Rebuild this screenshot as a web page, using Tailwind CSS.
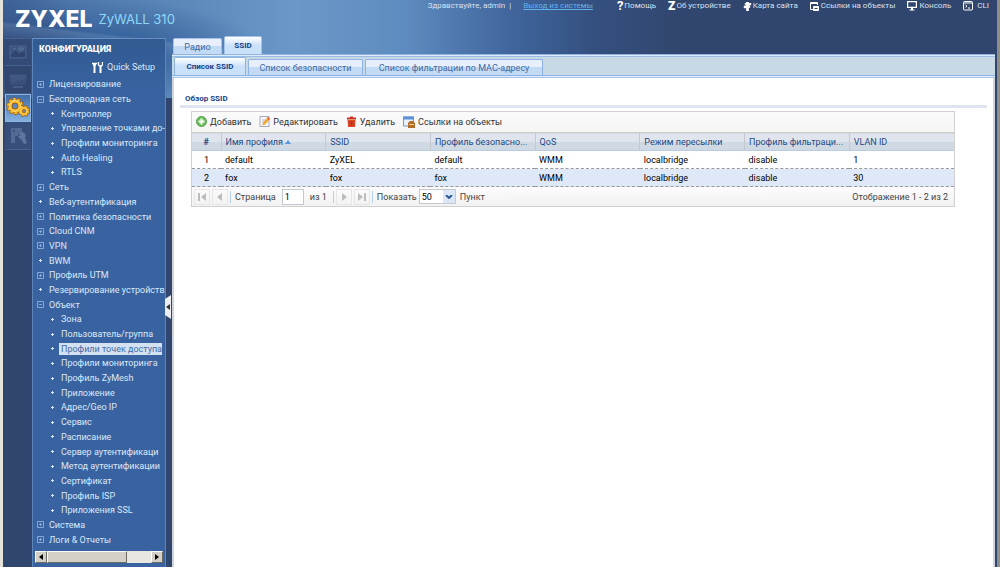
<!DOCTYPE html>
<html lang="ru">
<head>
    <meta charset="UTF-8">
    <meta name="viewport" content="width=device-width, initial-scale=1.0">
    <title>ZyWALL 310</title>
    <script src="https://cdn.jsdelivr.net/npm/@tailwindcss/browser@4"></script>
</head>
<body class="h-screen overflow-hidden bg-[#31466e] font-[Roboto,'Noto_Sans',sans-serif] text-[9px] leading-3">
    <div class="flex h-full flex-col border-l-3 border-r-3 border-l-[#e6e3da] border-r-[#8f8e8a] bg-[linear-gradient(187deg,transparent_50%,#a5c8e830_52%,transparent_62%),radial-gradient(ellipse_110px_70px_at_0px_60px,#2f4673_0%,transparent_100%),radial-gradient(ellipse_150px_50px_at_110px_50px,#2d5a96_0%,transparent_100%),linear-gradient(to_right,#4068a0_0px,#5580b2_120px,#6b97c8_290px,#5f8cc0_400px,#3f659c_510px,#34507f_590px,#31466e_680px)] bg-[length:460px_98px,100%_98px,100%_98px,100%_98px] bg-no-repeat">

        <header class="flex h-9 shrink-0 justify-between pl-3">
            <div class="flex items-center gap-1.5 pt-0.5 font-[Inter,sans-serif]">
                <span class="text-[23px] leading-6 font-extrabold text-white">ZYXEL</span>
                <span class="text-[13px] leading-6 text-[#8fd8fa]">ZyWALL 310</span>
            </div>
            <nav class="flex h-3 items-center gap-3 pr-2 text-[8px] text-[#d5e1f2]">
                <span>Здравствуйте, admin &nbsp;|</span>
                <a href="#" class="mr-3 text-[#62b1ee] underline">Выход из системы</a>
                <a href="#" class="flex items-center gap-px"><b class="text-[13px] text-white">?</b>Помощь</a>
                <a href="#" class="flex items-center gap-px"><b class="text-[12px] font-black text-white">Z</b>Об устройстве</a>
                <a href="#" class="flex items-center gap-px">
                    <svg class="size-[9px]" viewBox="0 0 9 10" fill="#fff"><path d="M3 0h3v1h2l1 1-1 1.500H6V4h1.500v2.500H6V10H3V7H1L0 5.500 1 4h2V3H1.500V1H3z"/></svg>Карта сайта</a>
                <a href="#" class="flex items-center gap-0.5">
                    <svg class="size-[9px]" viewBox="0 0 9 9" fill="none" stroke="#fff"><path d="M3 7.500H.5v-7h7V3M.5 1.500h7"/><path d="M3.500 4.500h5v4h-5z" fill="#fff"/><path d="M4.500 6.500h3" stroke="#31466e"/></svg>Ссылки на объекты</a>
                <a href="#" class="flex items-center gap-0.5">
                    <svg class="size-[10px]" viewBox="0 0 10 10" fill="none" stroke="#fff" stroke-width="1.200"><path d="M.6.600h8.800v5.800H.6z"/><path d="M4 7h2v1.500h1.500V9.500h-5v-1H4z" fill="#fff" stroke="none"/></svg>Консоль</a>
                <a href="#" class="flex items-center gap-1">
                    <svg class="size-[10px]" viewBox="0 0 10 10" fill="none" stroke="#fff"><rect x=".5" y=".5" width="9" height="8.500" rx="1"/><path d="M.5 2h9M2.500 4l1.500 1.200-1.500 1.200M5 7h2"/></svg>CLI</a>
            </nav>
        </header>

        <div class="flex min-h-0 flex-1">
            <!-- icon rail -->
            <nav class="flex w-[29px] shrink-0 flex-col pt-0.5 pl-0.5 pr-px">
                <button aria-label="Панель" class="flex h-7 items-center justify-center border-y border-[#46618c] bg-[#354b77]">
                    <svg class="size-5" viewBox="0 0 20 20" fill="none"><rect x="2" y="4" width="16" height="12" fill="#3b5480" stroke="#4a6490"/><path d="M3 13l4-5 4 4 6-3v6H3z" fill="#2f4570"/><path d="M5 7h3M11 6h4v2h-4z" stroke="#5f789f"/></svg>
                </button>
                <button aria-label="Монитор" class="flex h-7 items-center justify-center border-b border-[#405a86] bg-[#32476f]">
                    <svg class="size-5" viewBox="0 0 20 20" fill="#445c86"><path d="M1 4h18l-1 11H2z" fill="#3a507a"/><path d="M2 5h16v4L3 13z" fill="#415882"/><path d="M5 16h10v2H5z"/></svg>
                </button>
                <button aria-label="Конфигурация" class="flex h-7 items-center justify-center border border-[#8fb4dd] bg-linear-to-b from-[#416da8] to-[#84b0e0]">
                    <svg class="size-6" viewBox="0 0 24 24">
                        <g fill="none" stroke="#8f5510">
                            <circle cx="9" cy="10" r="7" stroke-width="3.600" stroke-dasharray="2.900 1.498"/>
                            <circle cx="9" cy="10" r="4.800" stroke-width="4.600"/>
                            <circle cx="18" cy="15" r="4.500" stroke-width="3" stroke-dasharray="2.200 1.334"/>
                            <circle cx="18" cy="15" r="3" stroke-width="3.800"/>
                        </g>
                        <g fill="none" stroke="#f8b52a">
                            <circle cx="9" cy="10" r="6.800" stroke-width="2.400" stroke-dasharray="2.700 1.572"/>
                            <circle cx="9" cy="10" r="4.800" stroke-width="3.200"/>
                            <circle cx="9" cy="10" r="5.300" stroke="#ffe07a" stroke-width="1"/>
                            <circle cx="18" cy="15" r="4.300" stroke-width="1.800" stroke-dasharray="2.100 1.277"/>
                            <circle cx="18" cy="15" r="3" stroke="#fbc544" stroke-width="2.200"/>
                        </g>
                    </svg>
                </button>
                <button aria-label="Обслуживание" class="flex h-7 items-center justify-center border-b border-[#46618c] bg-[#394f7b]">
                    <svg class="size-5" viewBox="0 0 20 20" fill="#526b94"><path d="M3 2h11v4h-4v4H7v7H3z"/><path d="M5 4h2v2H5z" fill="#3a527f"/><path d="M10 8a4 4 0 0 1 7 4l2 5-3 1-3-5a4 4 0 0 1-3-3h3z" fill="#5d769e"/></svg>
                </button>
            </nav>

            <!-- menu tree -->
            <aside class="relative mt-0.5 flex w-[134px] shrink-0 flex-col border-x border-t border-x-[#5c85ba] border-t-[#6790c3] bg-linear-to-b from-[#315a92] to-[#3963a0] to-10% pb-1 pl-0.5">
                <h2 class="pt-1 pl-1 font-extrabold text-white">КОНФИГУРАЦИЯ</h2>
                <a href="#" class="mt-1.5 flex items-center justify-end gap-1 pr-2.5 text-[#dbe8f8]">
                    <svg class="size-[11px]" viewBox="0 0 11 11" fill="none" stroke="#fff"><path d="M0 1.500h5M1 3h3M6.500 0v3l1.500 1h1l1.500-1V0" stroke-width="1.400"/><path d="M2.500 3v8M8.500 4v7" stroke-width="2"/></svg>
                    Quick Setup
                </a>
                <ul id="tree" class="mt-1 flex flex-1 flex-col text-[#dbe8f8]"></ul>
                <div class="mt-1 mr-0.5 flex h-3 shrink-0 bg-[#e9e7e1]">
                    <button aria-label="Влево" class="w-3 border border-t-white border-l-white border-r-[#6d6a63] border-b-[#6d6a63] bg-[#d4d0c8]">
                        <svg class="mx-auto h-2 w-1" viewBox="0 0 4 8"><path d="M4 1v6L0 4z"/></svg>
                    </button>
                    <div class="w-20 border border-t-white border-l-white border-r-[#6d6a63] border-b-[#6d6a63] bg-[#d4d0c8]"></div>
                    <button aria-label="Вправо" class="ml-auto w-3 border border-t-white border-l-white border-r-[#6d6a63] border-b-[#6d6a63] bg-[#d4d0c8]">
                        <svg class="mx-auto h-2 w-1" viewBox="0 0 4 8"><path d="M0 1v6l4-3z"/></svg>
                    </button>
                </div>
                <button aria-label="Свернуть меню" class="absolute top-1/2 -right-1.5 -mt-2 h-6 w-[6px]">
                    <svg class="size-full" viewBox="0 0 6 24"><path d="M6 0v24l-6-4V4z" fill="#eceef2"/><path d="M5 9v6L1 12z" fill="#333"/></svg>
                </button>
            </aside>

            <!-- content -->
            <main class="mr-0.5 ml-1.5 flex min-w-0 flex-1 flex-col">
                <div class="flex h-[18px] shrink-0 items-end gap-0.5 pl-px">
                    <button class="h-4 w-[49px] rounded-t-xs border border-b-0 border-[#a5c3ea] bg-linear-to-b from-[#e6effb] from-50% to-[#c3daf5] to-50% text-[#416aa3]">Радио</button>
                    <button class="h-[18px] w-[38px] rounded-t-xs border border-b-0 border-[#a5c3ea] bg-linear-to-b from-white to-[#cae1fa] to-50% text-[8px] font-bold text-[#15428b]">SSID</button>
                </div>
                <div class="h-[3px] shrink-0 border-y border-t-[#8fb4e0] border-b-[#9bbce3] bg-[#deecfd]"></div>
                <div class="flex h-[18px] shrink-0 items-end gap-0.5 bg-[#c8d9e6] pl-0.5">
                    <button class="h-[18px] w-[72px] rounded-t-xs border border-b-0 border-[#8db2e3] bg-linear-to-b from-white to-[#cae1fa] to-50% text-[8px] font-bold text-[#15428b]">Список SSID</button>
                    <button class="h-4 w-[115px] rounded-t-xs border border-b-0 border-[#8db2e3] bg-linear-to-b from-[#e6effb] from-50% to-[#c3daf5] to-50% text-[#416aa3]">Список безопасности</button>
                    <button class="h-4 w-[178px] rounded-t-xs border border-b-0 border-[#8db2e3] bg-linear-to-b from-[#e6effb] from-50% to-[#c3daf5] to-50% text-[#416aa3]">Список фильтрации по МАС-адресу</button>
                </div>
                <div class="h-[3px] shrink-0 border-y border-t-[#8db2e3] border-b-[#a9c6ea] bg-[#deecfd]"></div>

                <section class="flex-1 border-x-2 border-x-[#d0d5dd] bg-white pt-[15px] pr-1.5 pl-1.5">
                    <h1 class="border-b-3 border-[#dfe5ef] pl-[5px] text-[8px] font-bold text-[#15428b]">Обзор SSID</h1>

                    <div class="mt-[3px] mr-8 ml-[11px] border border-[#d0d0d0]">
                        <div class="flex h-5 items-center gap-2 bg-linear-to-b from-[#fafafa] to-[#f5f5f5] pb-px pl-1 text-[#333]">
                            <button class="flex items-center gap-[3px]">
                                <svg class="size-[11px]" viewBox="0 0 11 11"><circle cx="5.500" cy="5.500" r="5" fill="#6cbd5c" stroke="#55a34a"/><path d="M5.500 2.500v6M2.500 5.500h6" stroke="#fff" stroke-width="2"/></svg>Добавить</button>
                            <button class="flex items-center gap-[3px]">
                                <svg class="size-[11px]" viewBox="0 0 11 11"><path d="M1 .5h9v10H1z" fill="#f6f8fb" stroke="#a3a9b4"/><path d="M3 4h4M3 6h3" stroke="#b7c0ce"/><path d="M9 1l2 2-5 5.500-2.500 1 .5-2.800z" fill="#f4a62a"/><path d="M9 1l2 2-1 1-2-2z" fill="#e2583a"/></svg>Редактировать</button>
                            <button class="flex items-center gap-[3px]">
                                <svg class="size-[11px]" viewBox="0 0 11 11"><path d="M1 1.500h3V.5h3v1h3v2H1z" fill="#c9351b"/><path d="M1.500 4h8L9 11H2z" fill="#df4a2c"/><path d="M4 5v5M5.500 5v5M7 5v5" stroke="#a92812" stroke-width=".7"/></svg>Удалить</button>
                            <button class="flex items-center gap-[3px]">
                                <svg class="size-[12px]" viewBox="0 0 12 12"><path d="M.5 1h10v9H.5z" fill="#e9f1fb" stroke="#6f9cd6"/><path d="M0 .5h11v3H0z" fill="#5d92d8"/><path d="M5 7l2-2h3l2 2v5H5z" fill="#b06e28"/><path d="M6 8.500h5" stroke="#f2cf8c"/></svg>Ссылки на объекты</button>
                        </div>
                        <table class="w-full table-fixed border-collapse text-left text-black">
                            <thead>
                                <tr class="h-[18px] border-t border-b border-t-[#d0cfc8] border-b-[#b9cbdd] bg-linear-to-b from-[#e0e5ed] from-50% to-[#cfd9e4] to-50% text-[#1e4a85]">
                                    <th class="w-[29px] text-center font-bold">#</th>
                                    <th class="border-l border-[#c5c9cf] px-1 font-normal whitespace-nowrap">Имя профиля <svg class="inline h-1 w-1.5" viewBox="0 0 6 4"><path d="M3 0l3 4H0z" fill="#5a96dc"/></svg></th>
                                    <th class="border-l border-[#c5c9cf] px-1 font-normal whitespace-nowrap">SSID</th>
                                    <th class="border-l border-[#c5c9cf] px-1 font-normal whitespace-nowrap">Профиль безопасно...</th>
                                    <th class="border-l border-[#c5c9cf] px-1 font-normal whitespace-nowrap">QoS</th>
                                    <th class="border-l border-[#c5c9cf] px-1 font-normal whitespace-nowrap">Режим пересылки</th>
                                    <th class="border-l border-[#c5c9cf] px-1 font-normal whitespace-nowrap">Профиль фильтраци...</th>
                                    <th class="border-l border-[#c5c9cf] px-1 font-normal whitespace-nowrap">VLAN ID</th>
                                </tr>
                            </thead>
                            <tbody>
                                <tr class="h-[18px] border-b border-dashed border-[#999]">
                                    <td class="text-center">1</td>
                                    <td class="px-1">default</td>
                                    <td class="px-1">ZyXEL</td>
                                    <td class="px-1">default</td>
                                    <td class="px-1">WMM</td>
                                    <td class="px-1">localbridge</td>
                                    <td class="px-1">disable</td>
                                    <td class="px-1">1</td>
                                </tr>
                                <tr class="h-[18px] border-b border-dashed border-[#999] bg-[#dfe8f6]">
                                    <td class="text-center">2</td>
                                    <td class="px-1">fox</td>
                                    <td class="px-1">fox</td>
                                    <td class="px-1">fox</td>
                                    <td class="px-1">WMM</td>
                                    <td class="px-1">localbridge</td>
                                    <td class="px-1">disable</td>
                                    <td class="px-1">30</td>
                                </tr>
                            </tbody>
                        </table>
                        <div class="flex h-[19px] items-center bg-linear-to-b from-[#fcfcfc] to-[#f2f2f2] pl-0.5 text-[#444]">
                            <button aria-label="Первая" class="flex size-4 items-center justify-center border border-[#e6e6e6]"><svg class="size-2" viewBox="0 0 8 8" fill="#bcbcbc"><path d="M0 0h2v8H0zM8 0v8L3 4z"/></svg></button>
                            <button aria-label="Назад" class="ml-0.5 flex size-4 items-center justify-center border border-[#e6e6e6]"><svg class="size-2" viewBox="0 0 8 8" fill="#bcbcbc"><path d="M6 0v8L1 4z"/></svg></button>
                            <span class="mx-0.5 h-3 w-px bg-[#b5d0f0]"></span>
                            <label for="page" class="pl-0.5">Страница</label>
                            <input id="page" value="1" class="ml-1.5 h-4 w-[22px] border border-[#c5c9cf] bg-white px-0.5 text-black">
                            <span class="ml-1.5">из 1</span>
                            <span class="mr-0.5 ml-1.5 h-3 w-px bg-[#b5d0f0]"></span>
                            <button aria-label="Вперёд" class="flex size-4 items-center justify-center border border-[#e6e6e6]"><svg class="size-2" viewBox="0 0 8 8" fill="#bcbcbc"><path d="M2 0v8l5-4z"/></svg></button>
                            <button aria-label="Последняя" class="ml-0.5 flex size-4 items-center justify-center border border-[#e6e6e6]"><svg class="size-2" viewBox="0 0 8 8" fill="#bcbcbc"><path d="M0 0v8l5-4zM6 0h2v8H6z"/></svg></button>
                            <span class="mx-0.5 h-3 w-px bg-[#b5d0f0]"></span>
                            <label for="size" class="pl-0.5">Показать</label>
                            <span class="ml-0.5 flex h-[15px] border border-[#c5c9cf] bg-white">
                                <select id="size" class="w-[23px] appearance-none pl-0.5 text-black"><option>50</option><option>100</option></select>
                                <span class="pointer-events-none flex w-3 items-center justify-center bg-[#dbe7f6]"><svg class="h-1 w-2" viewBox="0 0 8 4" fill="none" stroke="#2e5a97" stroke-width="2"><path d="M1 0l3 3 3-3"/></svg></span>
                            </span>
                            <span class="ml-1">Пункт</span>
                            <span class="ml-auto pr-1.5">Отображение 1 - 2 из 2</span>
                        </div>
                    </div>
                </section>
            </main>
        </div>
    </div>

    <script>
        // [level, marker, title]
        const items = [
            [0, '+', 'Лицензирование'],
            [0, '-', 'Беспроводная сеть'],
            [1, '', 'Контроллер'],
            [1, '', 'Управление точками до-'],
            [1, '', 'Профили мониторинга'],
            [1, '', 'Auto Healing'],
            [1, '', 'RTLS'],
            [0, '+', 'Сеть'],
            [0, '', 'Веб-аутентификация'],
            [0, '+', 'Политика безопасности'],
            [0, '+', 'Cloud CNM'],
            [0, '+', 'VPN'],
            [0, '', 'BWM'],
            [0, '+', 'Профиль UTM'],
            [0, '', 'Резервирование устройств'],
            [0, '-', 'Объект'],
            [1, '', 'Зона'],
            [1, '', 'Пользователь/группа'],
            [1, '', 'Профили точек доступа'],
            [1, '', 'Профили мониторинга'],
            [1, '', 'Профиль ZyMesh'],
            [1, '', 'Приложение'],
            [1, '', 'Адрес/Geo IP'],
            [1, '', 'Сервис'],
            [1, '', 'Расписание'],
            [1, '', 'Сервер аутентификаци'],
            [1, '', 'Метод аутентификации'],
            [1, '', 'Сертификат'],
            [1, '', 'Профиль ISP'],
            [1, '', 'Приложения SSL'],
            [0, '+', 'Система'],
            [0, '+', 'Логи & Отчеты']
        ];
        const selected = 18;

        const marks = {
            '+': '<path d="M.5.5h6v6h-6zM2 3.500h3M3.500 2v3" stroke="#86a8d3"/>',
            '-': '<path d="M.5.5h6v6h-6zM2 3.500h3" stroke="#86a8d3"/>',
            '': '<path d="M2 3.500h3M3.500 2v3" stroke="#dbe8f8"/>'
        };

        const tree = document.getElementById('tree');
        items.forEach(([level, mark, title], i) => {
            const li = document.createElement('li');
            li.className = 'flex min-h-0 flex-1 items-center ' + (level ? 'pl-[14px]' : 'pl-[2px]');
            li.innerHTML = `<svg class="size-[7px] shrink-0" viewBox="0 0 7 7" fill="none">${marks[mark]}</svg>`;
            const a = document.createElement('a');
            a.href = '#';
            a.textContent = title;
            a.className = i === selected
                ? 'ml-[3px] bg-[#d3e1f1] pl-0.5 whitespace-nowrap text-[#3f6da8]'
                : 'pl-[5px] whitespace-nowrap';
            li.appendChild(a);
            tree.appendChild(li);
        });
    </script>
</body>
</html>
